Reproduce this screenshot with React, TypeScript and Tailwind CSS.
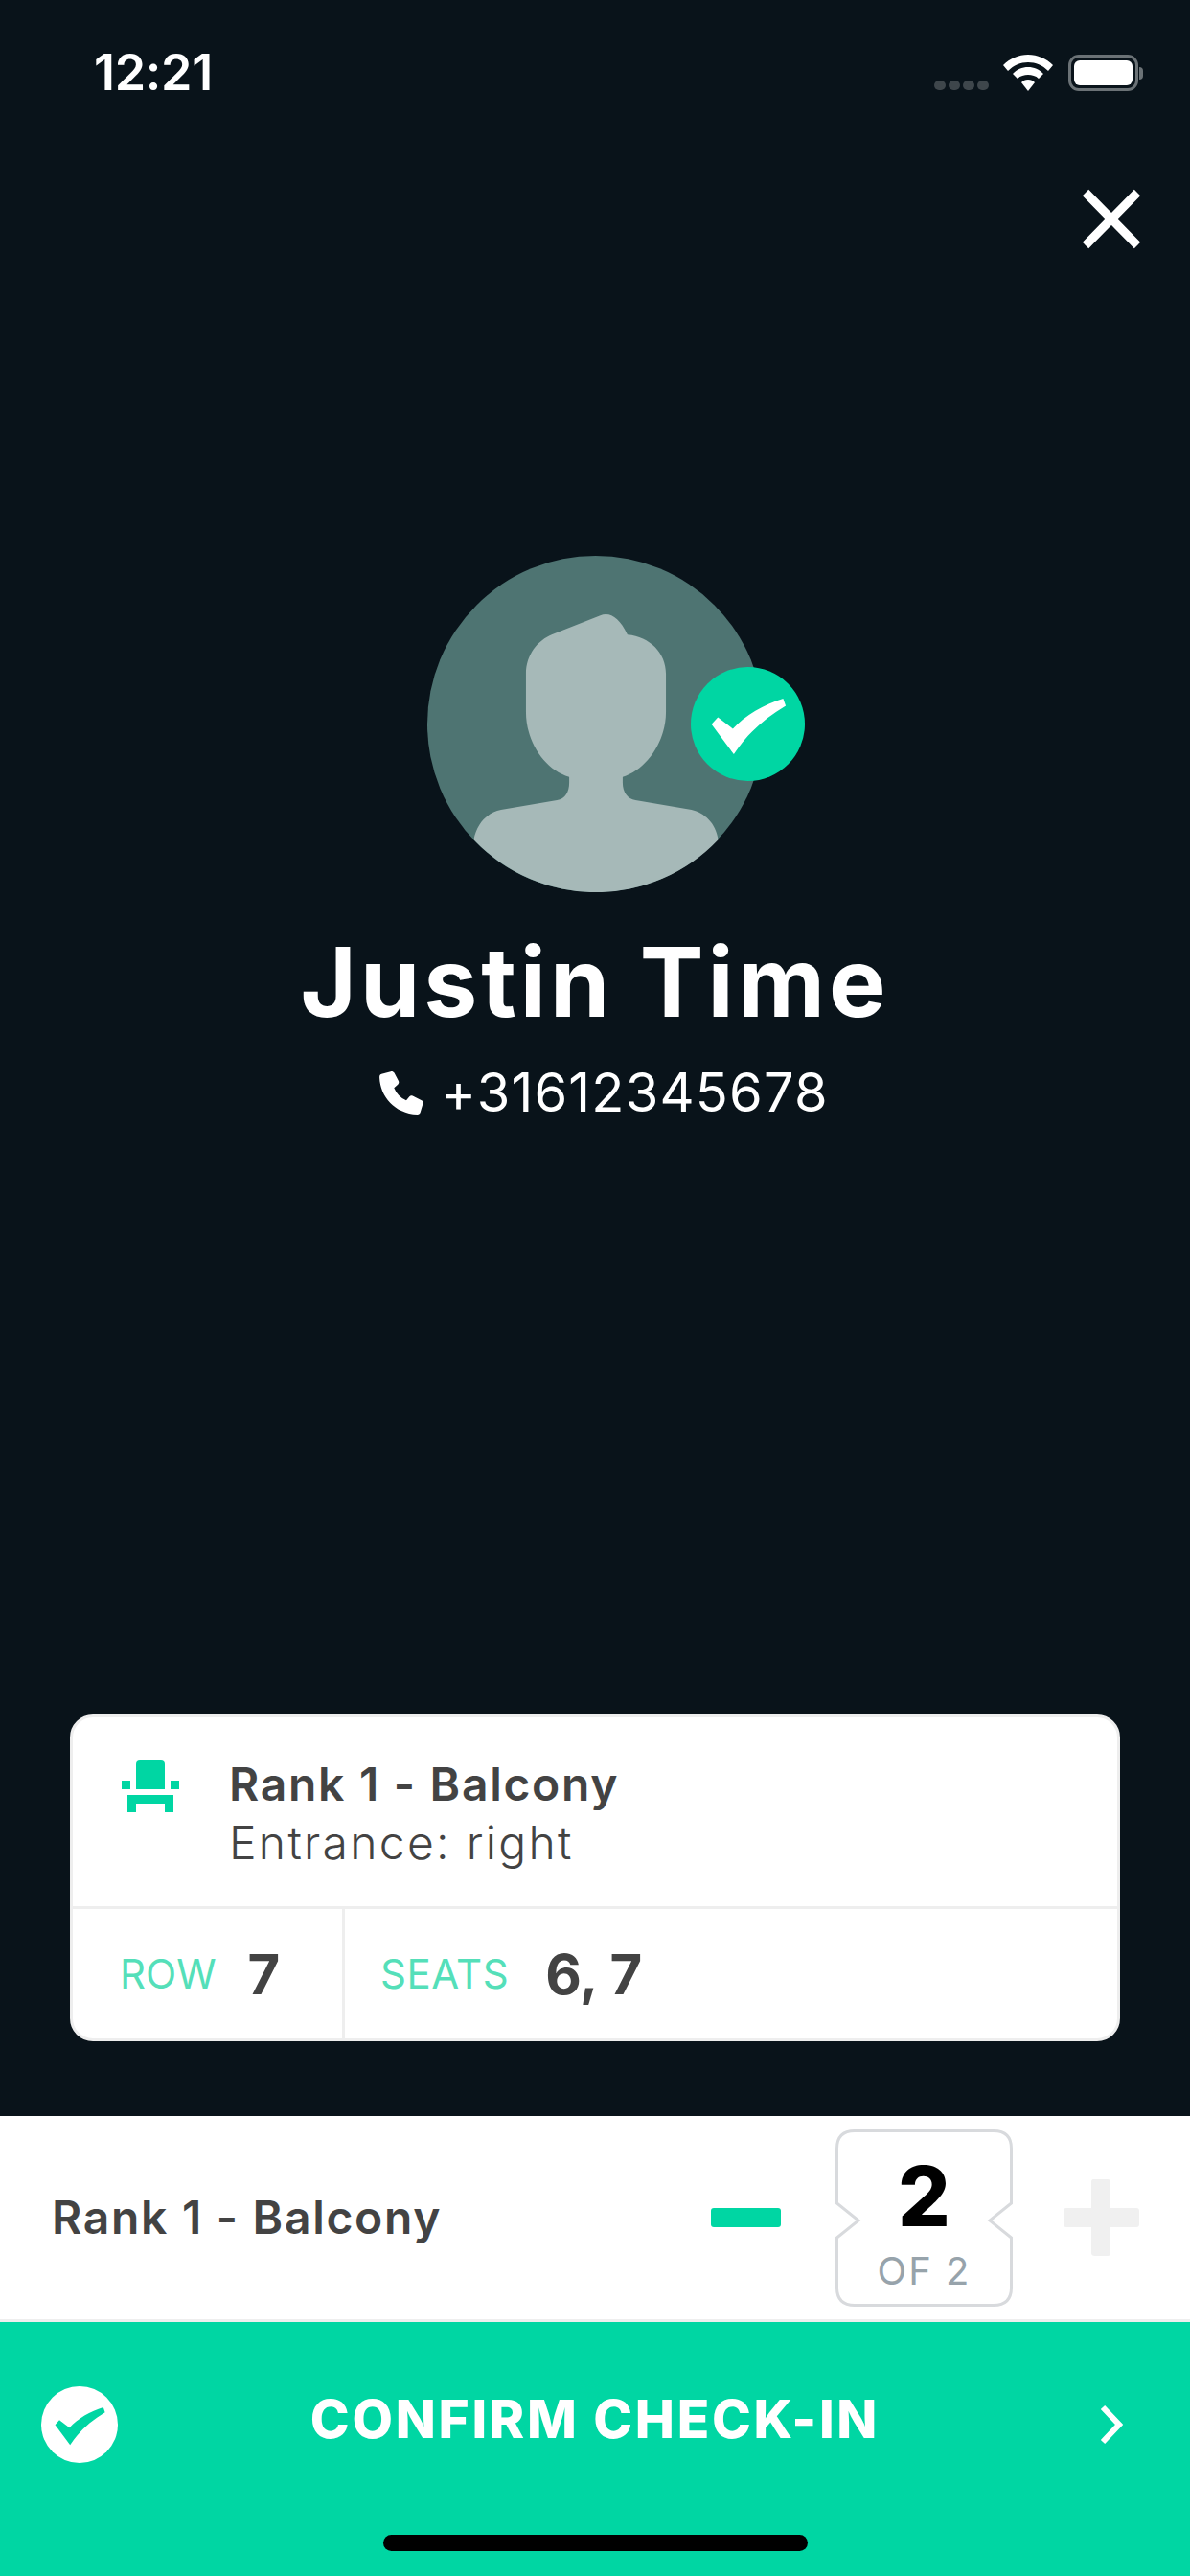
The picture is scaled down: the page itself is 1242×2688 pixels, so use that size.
import React from "react";

function CheckMark({ className, fill }: { className: string; fill: string }) {
  return (
    <svg viewBox="960 438 358 358" className={className}>
      <path d="M1025 618 L1045 596 L1092 632 C1130 590 1190 555 1250 537 L1258 560 C1190 600 1135 650 1095 712 Z" fill={fill} />
    </svg>
  );
}

function Avatar() {
  return (
    <svg viewBox="135 92 1050 1050" className="w-[351px] h-[351px]">
      <circle cx="660" cy="617" r="525" fill="#4e7472" />
      <path
        d="M443 460 C443 400 480 355 525 337 L675 278 C705 266 735 285 760 338 C830 345 880 395 880 460 L880 580 C880 670 820 760 745 782 L745 800 C745 830 760 850 785 855 L960 885 C1000 895 1035 925 1043 978 A525 525 0 0 1 280 978 C290 925 325 893 365 885 L540 855 C565 850 578 830 578 800 L578 782 C500 760 443 670 443 580 Z"
        fill="#a6b9b8"
      />
    </svg>
  );
}

function Chair() {
  return (
    <svg viewBox="0 0 60 54" className="w-[60px] h-[54px] shrink-0" fill="#00d6a3">
      <path d="M15 4 Q15 0 19 0 L41 0 Q45 0 45 4 L45 30 L15 30 Z" />
      <rect x="0" y="21" width="9" height="9" />
      <rect x="51" y="21" width="9" height="9" />
      <path d="M6 36 H54 V54 H45 V45 H15 V54 H6 Z" />
    </svg>
  );
}

export default function App() {
  return (
    <div className="w-[1242px] h-[2688px] flex flex-col bg-[#09131a] text-white font-['Inter',sans-serif] overflow-hidden">
      <div className="flex items-center justify-between h-[38px] mt-[57px] pl-[98px] pr-[49px]">
        <span className="text-[52px] leading-[38px] font-semibold tracking-[-0.300px]">12:21</span>
        <div className="flex items-center">
          <div className="flex gap-[3px] self-end mb-[1px]">
            <span className="w-[12px] h-[10px] rounded-full bg-[#3e464b]" />
            <span className="w-[12px] h-[10px] rounded-full bg-[#3e464b]" />
            <span className="w-[12px] h-[10px] rounded-full bg-[#3e464b]" />
            <span className="w-[12px] h-[10px] rounded-full bg-[#3e464b]" />
          </div>
          <svg viewBox="0 0 52 38" className="w-[52px] h-[38px] ml-[15px]" fill="#fff">
            <path d="M26 0 C36 0 45 4 52 11 L47 17 C41 11 34 8 26 8 C18 8 11 11 5 17 L0 11 C7 4 16 0 26 0 Z" />
            <path d="M26 13 C32 13 38 15.500 42 20 L37 25 C34 22 30 21 26 21 C22 21 18 22 15 25 L10 20 C14 15.500 20 13 26 13 Z" />
            <path d="M26 26 C29 26 31 27 33 29 L26 38 L19 29 C21 27 23 26 26 26 Z" />
          </svg>
          <div className="flex items-center ml-[16px]">
            <div className="w-[73px] h-[38px] rounded-[11px] border-[3px] border-[#6b7276] p-[3px]">
              <div className="w-full h-full rounded-[6px] bg-white" />
            </div>
            <span className="w-[4px] h-[13px] rounded-r-full bg-[#6b7276] ml-[1px]" />
          </div>
        </div>
      </div>

      <div className="flex justify-end pr-[51px] mt-[102px]">
        <svg viewBox="0 0 62 63" className="w-[62px] h-[63px]">
          <path d="M4 4 L58 59 M58 4 L4 59" stroke="#fff" strokeWidth="9" fill="none" />
        </svg>
      </div>

      <div className="flex flex-col items-center mt-[320px]">
        <div className="relative w-[351px] h-[351px]">
          <Avatar />
          <div className="absolute left-[275px] top-[116px] w-[119px] h-[119px] rounded-full bg-[#00d6a3]">
            <CheckMark className="w-full h-full" fill="#fff" />
          </div>
        </div>
        <h1 className="mt-[36px] text-[100px] leading-[116px] font-bold tracking-[4px]">Justin Time</h1>
        <div className="flex items-center mt-[24px] ml-[17px]">
          <svg viewBox="0 0 24 24" className="w-[50px] h-[50px] mr-[16px]" fill="#fff">
            <path d="M6.600 1.500 L2 2.800 C1.200 3 1 3.700 1 4.500 C1.400 14 8.500 22.500 20 23 C20.800 23 21.300 22.500 21.500 21.800 L22.800 17.500 C23 16.800 22.700 16.300 22.100 16 L17.600 13.700 C17 13.400 16.500 13.500 16 14 L14.400 16 C11.500 14.700 9.500 12.500 8.300 9.700 L10.200 8 C10.700 7.500 10.800 7 10.600 6.400 L8.400 2.200 C8 1.600 7.300 1.300 6.600 1.500 Z" />
          </svg>
          <span className="text-[56px] leading-[66px] font-normal tracking-[1.200px]">+31612345678</span>
        </div>
      </div>

      <div className="flex-1" />

      <div className="mx-[73px] h-[341px] flex flex-col rounded-[24px] bg-white border-[3px] border-[#eeeeee] text-[#434343]">
        <div className="flex h-[200px] pl-[51px] pt-[45px] border-b-[3px] border-[#eeeeee]">
          <Chair />
          <div className="ml-[52px] -mt-[5px]">
            <div className="text-[48px] leading-[60px] font-semibold tracking-[1.700px]">Rank 1 - Balcony</div>
            <div className="text-[48px] leading-[61px] font-light tracking-[2.300px]">Entrance: right</div>
          </div>
        </div>
        <div className="flex flex-1">
          <div className="w-[284px] flex items-center pl-[49px] border-r-[3px] border-[#eeeeee]">
            <span className="text-[42px] leading-none text-[#55dfb9]">ROW</span>
            <span className="ml-[33px] text-[58px] leading-none font-bold">7</span>
          </div>
          <div className="flex items-center pl-[37px]">
            <span className="text-[42px] leading-none text-[#55dfb9] tracking-[0.500px]">SEATS</span>
            <span className="ml-[38px] text-[58px] leading-none font-bold">6, 7</span>
          </div>
        </div>
      </div>

      <div className="mt-[78px] h-[215px] flex items-center bg-white border-b-[3px] border-[#eeeeee] pl-[54px] pr-[53px] text-[#434343]">
        <span className="text-[48px] font-semibold tracking-[1.700px]">Rank 1 - Balcony</span>
        <span className="ml-auto w-[73px] h-[20px] rounded-[3px] bg-[#00d6a3]" />
        <div className="relative ml-[57px] w-[185px] h-[185px] flex flex-col items-center">
          <svg viewBox="0 0 185 185" className="absolute inset-0 w-full h-full" fill="none">
            <path
              d="M20 1.500 H165 Q183.500 1.500 183.500 20 V77 L161 95 L183.500 113 V165 Q183.500 183.500 165 183.500 H20 Q1.500 183.500 1.500 165 V113 L24 95 L1.500 77 V20 Q1.500 1.500 20 1.500 Z"
              stroke="#d8dadd"
              strokeWidth="3"
            />
          </svg>
          <span className="relative mt-[25px] text-[86px] leading-[90px] font-extrabold text-black">2</span>
          <span className="relative mt-[9px] text-[40px] leading-[48px] text-[#97a3ab] tracking-[2px]">OF 2</span>
        </div>
        <svg viewBox="0 0 79 80" className="ml-[53px] w-[79px] h-[80px]" fill="#f0f0f0">
          <path d="M31 0 H46 Q49 0 49 3 V30 H76 Q79 30 79 33 V47 Q79 50 76 50 H49 V77 Q49 80 46 80 H33 Q29 80 29 77 V50 H3 Q0 50 0 47 V33 Q0 30 3 30 H29 V3 Q29 0 31 0 Z" />
        </svg>
      </div>

      <div className="h-[265px] flex flex-col bg-[#00d6a3]">
        <div className="flex items-center h-[214px] pl-[43px] pr-[70px]">
          <div className="w-[80px] h-[80px] rounded-full bg-white">
            <CheckMark className="w-full h-full" fill="#00d6a3" />
          </div>
          <span className="flex-1 text-center text-[55px] leading-none font-extrabold tracking-[2.700px] pr-[28px] -mt-[12px]">CONFIRM CHECK-IN</span>
          <svg viewBox="0 0 25 42" className="w-[25px] h-[42px]" fill="none">
            <path d="M4 3 L21 21 L4 39" stroke="#fff" strokeWidth="6" />
          </svg>
        </div>
        <div className="mt-[8px] mx-auto w-[443px] h-[17px] rounded-full bg-black" />
      </div>
    </div>
  );
}
